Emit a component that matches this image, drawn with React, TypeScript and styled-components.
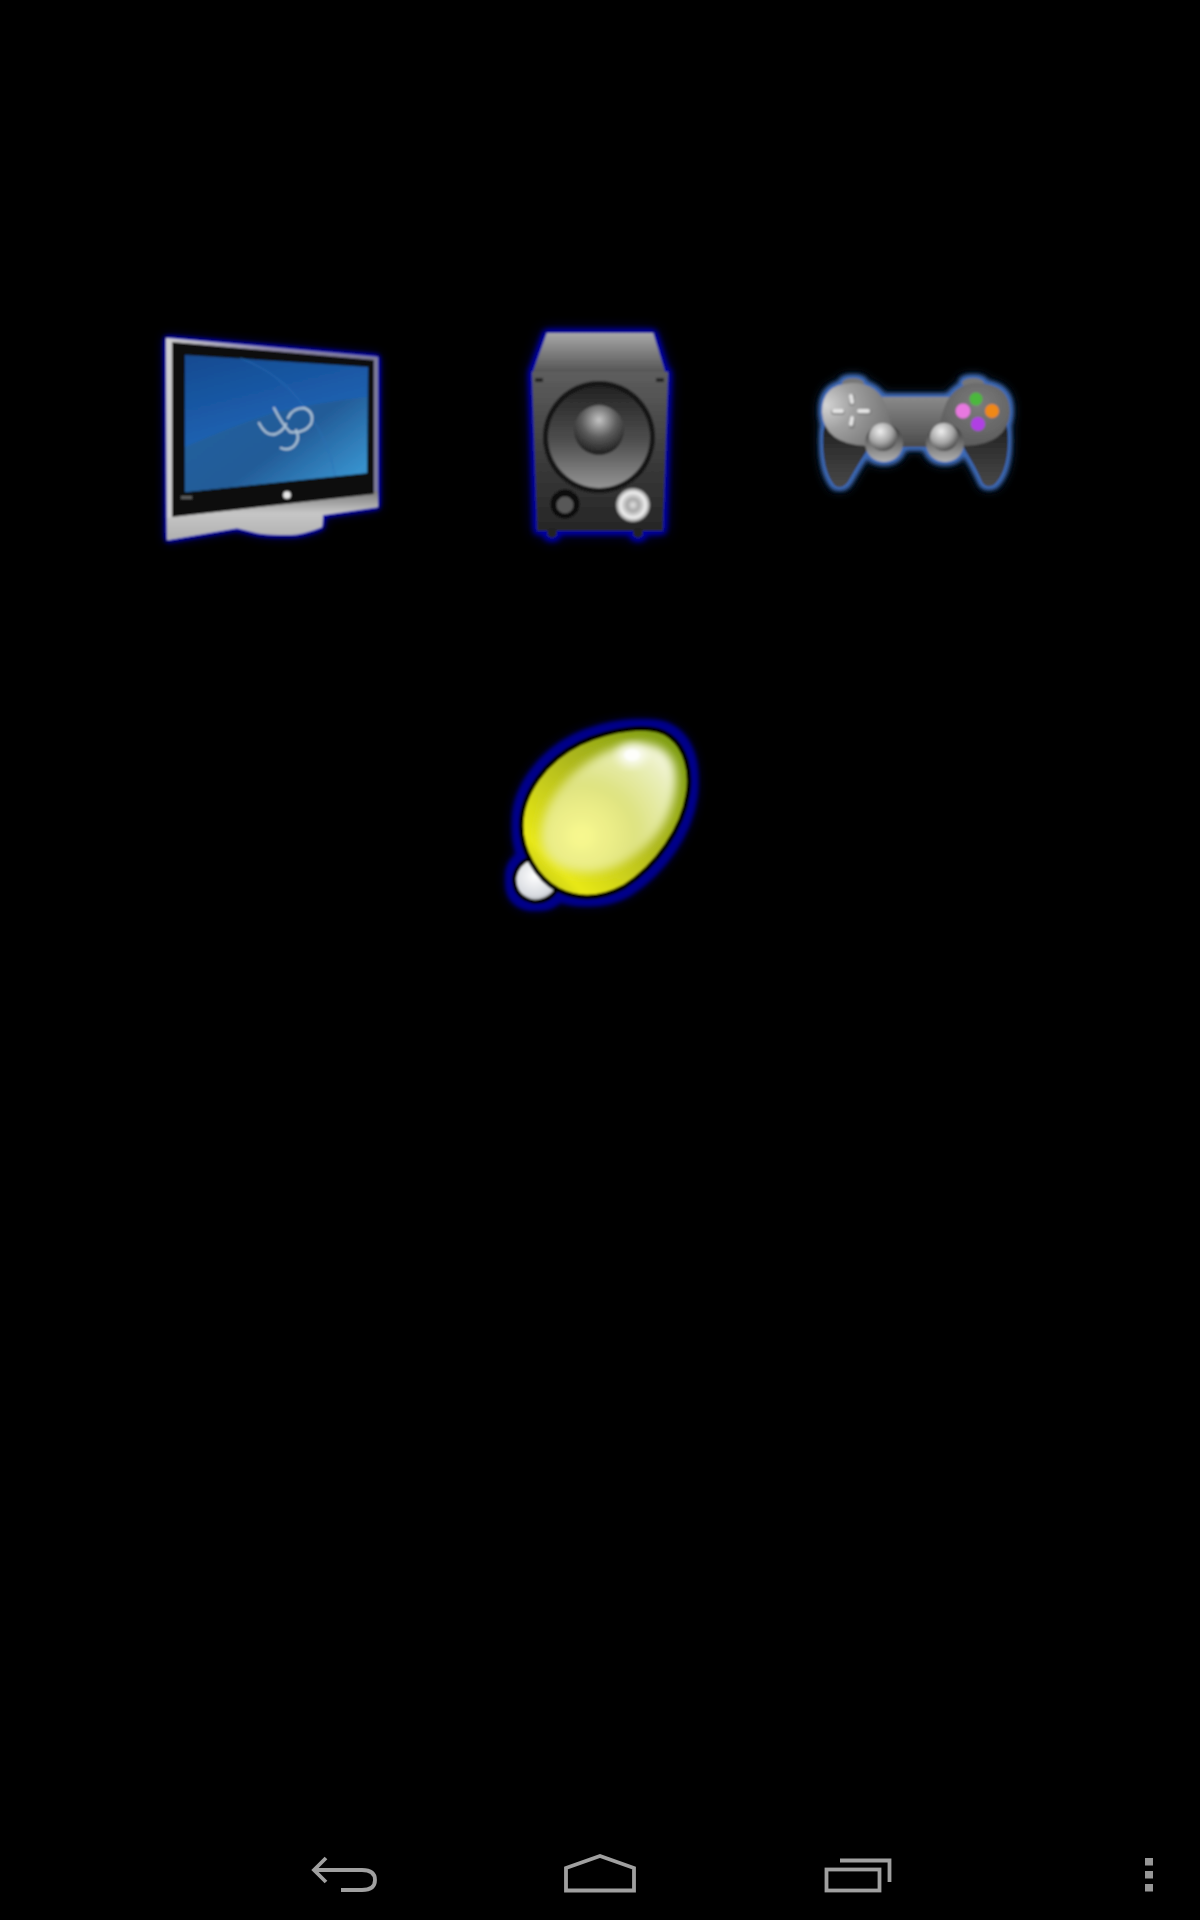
import React from "react"
import styled, { createGlobalStyle } from "styled-components"

const GlobalStyle = createGlobalStyle`
  html, body {
    margin: 0;
    padding: 0;
    background: #000;
  }
`

const Page = styled.div`
  width: 1200px;
  height: 1920px;
  display: flex;
  flex-direction: column;
  background: #000;
  overflow: hidden;
`

const IconGrid = styled.div`
  flex: 1;
  display: grid;
  grid-template-columns: 329px 317px 240px;
  grid-auto-rows: 240px;
  row-gap: 142px;
  padding: 314px 0 0 151px;
`

const IconCell = styled.button<{ $column?: number }>`
  grid-column: ${p => p.$column || "auto"};
  width: 240px;
  height: 240px;
  padding: 0;
  border: 0;
  background: none;
  display: block;
`

const IconArt = styled.svg`
  display: block;
  width: 240px;
  height: 240px;
  overflow: visible;
`

const NavBar = styled.nav`
  height: 96px;
  display: grid;
  grid-template-columns: 256px 258px 291px 80px;
  padding-left: 304px;
  align-items: start;
`

const NavButton = styled.svg`
  display: block;
  width: 80px;
  height: 48px;
  margin-top: 26px;
  fill: none;
  stroke: #a0a0a0;
  stroke-width: 3.8;
`

const MenuDot = styled.rect`
  fill: #979797;
  stroke: none;
`

// soft coloured halo round an icon, the source art gets a blur since the original is an upscaled bitmap
const Glow = ({ id, color, spread, blur, soft = 1.3 }: { id: string; color: string; spread: number; blur: number; soft?: number }) => (
  <filter id={id} x="-30%" y="-30%" width="160%" height="160%">
    <feMorphology in="SourceAlpha" operator="dilate" radius={spread} result="grown" />
    <feGaussianBlur in="grown" stdDeviation={blur} result="halo" />
    <feGaussianBlur in="grown" stdDeviation={blur * 2} result="wide" />
    <feFlood floodColor={color} />
    <feComposite in2="halo" operator="in" result="tinted" />
    <feFlood floodColor={color} floodOpacity="0.7" />
    <feComposite in2="wide" operator="in" result="outer" />
    <feGaussianBlur in="SourceGraphic" stdDeviation={soft} result="art" />
    <feMerge>
      <feMergeNode in="outer" />
      <feMergeNode in="tinted" />
      <feMergeNode in="tinted" />
      <feMergeNode in="art" />
    </feMerge>
  </filter>
)

const TvIcon = () => (
  <IconArt viewBox="151 314 240 240">
    <defs>
      <Glow id="tvGlow" color="#0c04b4" spread={1} blur={2.6} soft={1.1} />
      <linearGradient id="tvScreenTop" x1="0" y1="0" x2="0.35" y2="1">
        <stop offset="0" stopColor="#154a90" />
        <stop offset="0.55" stopColor="#1c5fae" />
        <stop offset="1" stopColor="#2b80d2" />
      </linearGradient>
      <linearGradient id="tvScreenLow" x1="0" y1="0" x2="1" y2="0.7">
        <stop offset="0" stopColor="#22609f" />
        <stop offset="0.6" stopColor="#235c98" />
        <stop offset="1" stopColor="#3790cc" />
      </linearGradient>
      <linearGradient id="tvBand" x1="0" y1="0" x2="0" y2="1">
        <stop offset="0" stopColor="#7a7a7a" />
        <stop offset="0.45" stopColor="#c6c6c6" />
        <stop offset="1" stopColor="#b0b0b0" />
      </linearGradient>
      <linearGradient id="tvEdge" x1="0" y1="0" x2="1" y2="0">
        <stop offset="0" stopColor="#d0d0d0" />
        <stop offset="0.5" stopColor="#8f8aac" />
        <stop offset="1" stopColor="#7c7a98" />
      </linearGradient>
    </defs>
    <g filter="url(#tvGlow)">
      <path d="M166 338 L378 357 L378 507 L323 515 L322 527 Q305 534 290 535 Q268 535 257 533 L237 528 L167 540 Z" fill="url(#tvEdge)" />
      <path d="M173 517 L378 491 L378 507 L323 515 L322 527 Q305 534 290 535 Q268 535 257 533 L237 528 L167 540 L167 518 Z" fill="url(#tvBand)" />
      <path d="M172 342 L374 360 L374 494 L172 517 Z" fill="#111" />
      <path d="M185 355 L368 367 L367 473 L185 492 Z" fill="url(#tvScreenTop)" />
      <path d="M185 447 Q235 425 273 413 Q320 402 367 397 L367 473 L185 492 Z" fill="url(#tvScreenLow)" />
      <path d="M240 358 Q285 375 310 415 Q330 445 335 476" fill="none" stroke="#2c70b8" strokeWidth="1.4" opacity="0.5" />
      <path d="M259 423 Q266 437 276 434 Q283 431 286 424 M274 408 Q282 424 290 432 Q304 434 311 424 Q315 412 304 408 Q292 408 288 418 M296 430 Q301 440 293 447 Q287 451 281 448" fill="none" stroke="#a9c0d4" strokeWidth="2.4" strokeLinecap="round" />
      <circle cx="287" cy="495" r="3.8" fill="#e8e8e8" />
      <rect x="181" y="496" width="11" height="3" fill="#5c5c5c" />
    </g>
  </IconArt>
)

const SpeakerIcon = () => (
  <IconArt viewBox="480 314 240 240">
    <defs>
      <Glow id="spkGlow" color="#0400a8" spread={2} blur={3.4} soft={1.2} />
      <linearGradient id="spkTop" x1="0" y1="0" x2="0" y2="1">
        <stop offset="0" stopColor="#a8a8a8" />
        <stop offset="1" stopColor="#555" />
      </linearGradient>
      <linearGradient id="spkBody" x1="0" y1="0" x2="0" y2="1">
        <stop offset="0" stopColor="#5e5e5e" />
        <stop offset="0.6" stopColor="#383838" />
        <stop offset="1" stopColor="#262626" />
      </linearGradient>
      <linearGradient id="spkCone" x1="0" y1="0" x2="0" y2="1">
        <stop offset="0" stopColor="#222" />
        <stop offset="0.55" stopColor="#505050" />
        <stop offset="1" stopColor="#949494" />
      </linearGradient>
      <radialGradient id="spkDome" cx="0.5" cy="0.3" r="0.7">
        <stop offset="0" stopColor="#c4c4c4" />
        <stop offset="0.5" stopColor="#5c5c5c" />
        <stop offset="1" stopColor="#1c1c1c" />
      </radialGradient>
      <radialGradient id="spkTweeter" cx="0.5" cy="0.5" r="0.5">
        <stop offset="0" stopColor="#e0e0e0" />
        <stop offset="0.35" stopColor="#a8a8a8" />
        <stop offset="0.75" stopColor="#f0f0f0" />
        <stop offset="1" stopColor="#8a8a8a" />
      </radialGradient>
    </defs>
    <g filter="url(#spkGlow)">
      <path d="M547 333 L653 333 L665 372 L533 372 Z" fill="url(#spkTop)" />
      <path d="M532 372 L668 372 L663 531 L537 531 Z" fill="url(#spkBody)" />
      <circle cx="552" cy="533" r="5" fill="#222" />
      <circle cx="638" cy="533" r="5" fill="#222" />
      <rect x="535" y="378" width="8" height="4" fill="#222" />
      <rect x="656" y="378" width="8" height="4" fill="#222" />
      <circle cx="599" cy="437" r="56" fill="#121212" />
      <circle cx="599" cy="437" r="51" fill="url(#spkCone)" />
      <circle cx="599" cy="430" r="25" fill="url(#spkDome)" />
      <circle cx="565" cy="504" r="14.5" fill="#0e0e0e" />
      <circle cx="565" cy="505" r="8.5" fill="#585858" />
      <circle cx="633" cy="505" r="17" fill="url(#spkTweeter)" />
    </g>
  </IconArt>
)

const PadIcon = () => (
  <IconArt viewBox="797 314 240 240">
    <defs>
      <Glow id="padGlow" color="#3f6cb8" spread={2} blur={2.6} soft={1.1} />
      <radialGradient id="padLeft" cx="0.05" cy="0.35" r="1">
        <stop offset="0" stopColor="#d4d4d4" />
        <stop offset="0.4" stopColor="#a0a0a0" />
        <stop offset="1" stopColor="#707070" />
      </radialGradient>
      <radialGradient id="padRight" cx="0.55" cy="0.35" r="0.8">
        <stop offset="0" stopColor="#7c7c7c" />
        <stop offset="1" stopColor="#555" />
      </radialGradient>
      <linearGradient id="padBridge" x1="0" y1="0" x2="0" y2="1">
        <stop offset="0" stopColor="#8a8a8a" />
        <stop offset="1" stopColor="#4a4a4a" />
      </linearGradient>
      <linearGradient id="padGrip" x1="0" y1="0" x2="0" y2="1">
        <stop offset="0" stopColor="#1e1e1e" />
        <stop offset="1" stopColor="#484848" />
      </linearGradient>
      <radialGradient id="padStick" cx="0.4" cy="0.3" r="0.7">
        <stop offset="0" stopColor="#efefef" />
        <stop offset="0.6" stopColor="#a4a4a4" />
        <stop offset="1" stopColor="#4e4e4e" />
      </radialGradient>
      <linearGradient id="padRim" x1="0" y1="0" x2="0" y2="1">
        <stop offset="0" stopColor="#2a2a2a" />
        <stop offset="1" stopColor="#b4b4b4" />
      </linearGradient>
    </defs>
    <g filter="url(#padGlow)">
      <path d="M823 432 Q821 470 835 486 Q842 490 848 482 Q856 468 866 452 L880 420 L826 420 Z" fill="url(#padGrip)" />
      <path d="M1008 432 Q1010 470 994 485 Q986 489 982 482 Q976 468 966 452 L950 420 L1006 420 Z" fill="url(#padGrip)" />
      <path d="M877 397 L953 397 L950 442 L930 447 L902 447 L880 442 Z" fill="url(#padBridge)" />
      <ellipse cx="853" cy="383" rx="11" ry="5" fill="#777" />
      <ellipse cx="973" cy="383" rx="11" ry="5" fill="#777" />
      <path d="M822 412 Q822 384 852 383 Q878 383 886 406 Q892 424 892 438 L866 446 Q824 444 822 412 Z" fill="url(#padLeft)" />
      <path d="M1010 412 Q1010 384 977 383 Q953 384 945 406 Q938 424 938 438 L966 446 Q1008 444 1010 412 Z" fill="url(#padRight)" />
      <circle cx="884" cy="443" r="19" fill="url(#padRim)" />
      <circle cx="945" cy="443" r="19" fill="url(#padRim)" />
      <circle cx="883" cy="437" r="14" fill="url(#padStick)" />
      <circle cx="944" cy="437" r="14" fill="url(#padStick)" />
      <g fill="none" stroke="#7a7a7a" strokeWidth="6" strokeLinecap="round" opacity="0.7">
        <path d="M852 397 L852 403 M852 419 L852 426 M834 412 L842 412 M860 412 L869 412" />
      </g>
      <g fill="none" stroke="#e4e4e4" strokeWidth="4" strokeLinecap="round">
        <path d="M851 396 L852 402 M852 418 L851 424 M834 411 L842 411 M859 411 L868 411" />
      </g>
      <circle cx="976" cy="399" r="6.4" fill="#4cb83c" />
      <circle cx="963" cy="411" r="7.4" fill="#e878e0" />
      <circle cx="992" cy="411" r="7" fill="#f08818" />
      <circle cx="978" cy="424" r="7" fill="#b040e4" />
    </g>
  </IconArt>
)

const BulbIcon = () => (
  <IconArt viewBox="480 696 240 240">
    <defs>
      <Glow id="bulbGlow" color="#00008a" spread={5} blur={2.6} soft={1.1} />
      <filter id="bulbSoft" x="-20%" y="-20%" width="140%" height="140%">
        <feGaussianBlur stdDeviation="5" />
      </filter>
      <linearGradient id="bulbShell" x1="1" y1="0" x2="0" y2="1">
        <stop offset="0" stopColor="#72960e" />
        <stop offset="0.45" stopColor="#aeb81c" />
        <stop offset="0.8" stopColor="#e8e818" />
        <stop offset="1" stopColor="#a4ac10" />
      </linearGradient>
      <radialGradient id="bulbInner" cx="0.3" cy="0.72" r="0.9">
        <stop offset="0" stopColor="#fafa90" />
        <stop offset="0.45" stopColor="#dee280" />
        <stop offset="0.8" stopColor="#e8eeb8" />
        <stop offset="1" stopColor="#f6f8e4" />
      </radialGradient>
      <radialGradient id="bulbBase" cx="0.45" cy="0.4" r="0.7">
        <stop offset="0" stopColor="#ffffff" />
        <stop offset="0.65" stopColor="#d8dbe0" />
        <stop offset="1" stopColor="#7c8086" />
      </radialGradient>
    </defs>
    <g filter="url(#bulbGlow)">
      <path d="M530 858 L560 884 Q552 902 534 902 Q514 898 514 878 Q516 864 530 858 Z" fill="url(#bulbBase)" stroke="#000" strokeWidth="4.5" />
      <path
        d="M521 826 C521 794 545 760 580 743 C610 729 652 722 670 736 C686 748 692 772 688 794 C683 828 657 866 624 887 C600 900 578 900 558 890 C536 878 521 850 521 826 Z"
        fill="url(#bulbShell)"
        stroke="#000"
        strokeWidth="5"
      />
      <path
        d="M541 840 C539 800 575 762 618 747 C640 740 662 742 672 760 C680 776 676 806 660 830 C640 858 608 876 580 872 C558 870 543 858 541 840 Z"
        fill="url(#bulbInner)"
        filter="url(#bulbSoft)"
      />
      <ellipse cx="632" cy="755" rx="14" ry="11" fill="#fff" opacity="0.8" filter="url(#bulbSoft)" />
      <ellipse cx="632" cy="755" rx="8" ry="6" fill="#fff" opacity="0.7" />
    </g>
  </IconArt>
)

const App: React.FC = () => {
  return (
    <Page>
      <GlobalStyle />
      <IconGrid>
        <IconCell><TvIcon /></IconCell>
        <IconCell><SpeakerIcon /></IconCell>
        <IconCell><PadIcon /></IconCell>
        <IconCell $column={2}><BulbIcon /></IconCell>
      </IconGrid>
      <NavBar>
        <NavButton viewBox="304 1850 80 48">
          <path d="M326 1858 L314 1870 L326 1882 M314 1870 L362 1870 Q375 1870 375 1880 Q375 1890 362 1890 L341 1890" />
        </NavButton>
        <NavButton viewBox="560 1850 80 48">
          <path d="M566 1868 L600 1856 L634 1868 L634 1890.500 L566 1890.500 Z" />
        </NavButton>
        <NavButton viewBox="818 1850 80 48">
          <rect x="826.500" y="1869.500" width="53" height="21" />
          <path d="M840 1860.500 L889.500 1860.500 L889.500 1882" />
        </NavButton>
        <NavButton viewBox="1109 1850 80 48">
          <MenuDot x="1145" y="1858" width="8" height="7.500" />
          <MenuDot x="1145" y="1871" width="8" height="7.500" />
          <MenuDot x="1145" y="1884" width="8" height="7.500" />
        </NavButton>
      </NavBar>
    </Page>
  )
}

export default App
